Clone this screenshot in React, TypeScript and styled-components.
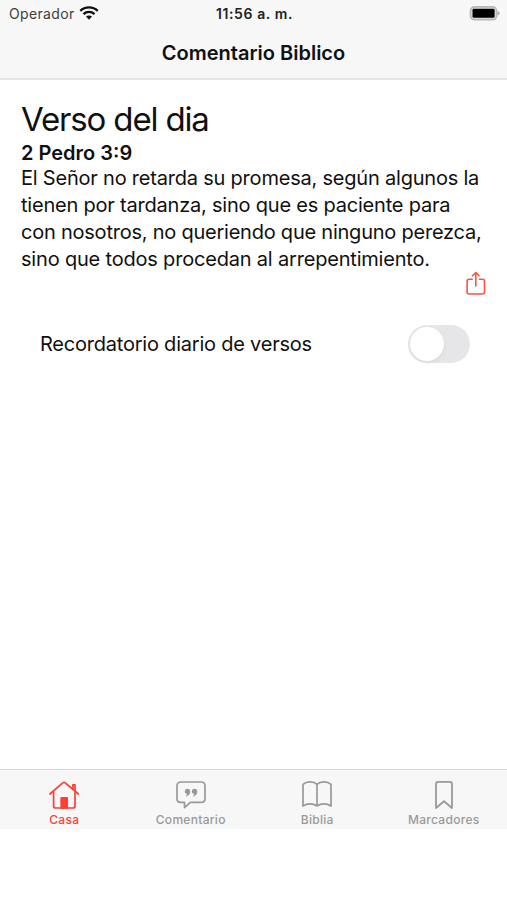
import React, { useState } from "react";
import styled, { createGlobalStyle } from "styled-components";

const GlobalStyle = createGlobalStyle`
  *, *::before, *::after { box-sizing: border-box; }
  body { margin: 0; background: #fff; color: #101010; font-family: Inter, "Liberation Sans", sans-serif; }
`;

const Screen = styled.div`
  display: flex;
  flex-direction: column;
  width: 507px;
  height: 900px;
  padding-bottom: 71px;
  overflow: hidden;
  background: #fff;
`;

const Header = styled.header`
  flex: none;
  height: 80px;
  background: #f7f7f7;
  border-bottom: 2px solid #e6e6e6;
`;

const StatusBar = styled.div`
  display: grid;
  grid-template-columns: 1fr auto 1fr;
  align-items: center;
  height: 27px;
  padding: 0 7px 0 9px;
`;

const Carrier = styled.div`
  display: flex;
  align-items: center;
  gap: 4px;
  color: #3c3c3c;
  font-size: 14px;
  letter-spacing: 0.35px;
`;

const Clock = styled.div`
  font-size: 14px;
  font-weight: 600;
  letter-spacing: 0.6px;
  color: #222;
`;

const BatterySlot = styled.div`
  display: flex;
  justify-content: flex-end;
`;

const NavTitle = styled.h1`
  margin: 0;
  height: 51px;
  line-height: 52px;
  text-align: center;
  font-size: 20px;
  font-weight: 600;
  letter-spacing: 0;
`;

const Content = styled.main`
  flex: 1;
  padding: 20px 21px 0 21px;
`;

const Heading = styled.h2`
  margin: 0;
  height: 40px;
  line-height: 39px;
  font-size: 33px;
  font-weight: 400;
  letter-spacing: -1.15px;
`;

const Reference = styled.h3`
  margin: 0;
  height: 25px;
  line-height: 26px;
  font-size: 20px;
  font-weight: 600;
`;

const Verse = styled.p`
  margin: 0;
  line-height: 27px;
  font-size: 20px;
`;

const Line = styled.span<{ $spacing: number }>`
  display: block;
  white-space: nowrap;
  letter-spacing: ${(p) => p.$spacing}px;
`;

const ShareRow = styled.div`
  display: flex;
  justify-content: flex-end;
  height: 26px;
  margin-top: -2px;
`;

const IconButton = styled.button`
  display: block;
  height: 25px;
  padding: 0;
  border: 0;
  background: none;
  color: #fb5148;
  svg { display: block; }
`;

const SettingRow = styled.div`
  display: flex;
  align-items: center;
  justify-content: space-between;
  height: 38px;
  margin: 28px 16px 0 19px;
  font-size: 20px;
  letter-spacing: -0.22px;
`;

const Toggle = styled.button<{ $on: boolean }>`
  display: flex;
  justify-content: ${(p) => (p.$on ? "flex-end" : "flex-start")};
  width: 62px;
  height: 38px;
  padding: 2px;
  border: 0;
  border-radius: 19px;
  background: ${(p) => (p.$on ? "#34c759" : "#e6e6e8")};
`;

const Knob = styled.span`
  width: 34px;
  height: 34px;
  border-radius: 50%;
  background: #fff;
  box-shadow: 0 2px 4px rgba(0, 0, 0, 0.06);
`;

const TabBar = styled.nav`
  flex: none;
  display: grid;
  grid-template-columns: repeat(4, 1fr);
  height: 60px;
  padding-left: 1px;
  border-top: 1px solid #d9d9d9;
  background: #f7f7f7;
`;

const Tab = styled.button<{ $active: boolean }>`
  display: flex;
  flex-direction: column;
  align-items: center;
  padding: 10px 0 0;
  border: 0;
  background: none;
  font-family: inherit;
  font-size: 12px;
  font-weight: 500;
  line-height: 16px;
  letter-spacing: 0.3px;
  color: ${(p) => (p.$active ? "#ff3e35" : "#999")};
  svg { display: block; flex: none; }
`;

const Wifi = () => (
  <svg width="20" height="15" viewBox="0 0 20 15" fill="none" stroke="#111" strokeWidth="2.3">
    <path d="M1.3 4.8C6.2.2 13.8.2 18.7 4.8" />
    <path d="M4.5 8.1C7.6 5.2 12.4 5.2 15.5 8.1" />
    <path d="M10 13.7 7 10.6C8.7 9 11.3 9 13 10.6Z" fill="#111" stroke="none" />
  </svg>
);

const Battery = () => (
  <svg width="31" height="15" viewBox="0 0 31 15">
    <rect x="1.5" y="0.9" width="26.1" height="12.8" rx="4" fill="#e2e2e2" stroke="#b8b8b8" strokeWidth="1.7" />
    <rect x="3.5" y="2.8" width="22.1" height="9" rx="1.4" fill="#000" />
    <path d="M28.6 4.9q2 .8 2 2.3t-2 2.3z" fill="#a8a8a8" />
  </svg>
);

const Share = () => (
  <svg width="20" height="25" viewBox="0 0 20 25" fill="none" stroke="currentColor" strokeWidth="1.6" strokeLinecap="round" strokeLinejoin="round">
    <path d="M6.2 8.2H3.2Q1.1 8.2 1.1 10.3V21Q1.1 23 3.2 23H16.4Q18.5 23 18.5 21V10.3Q18.5 8.2 16.4 8.2H13.4" />
    <path d="M9.8 15V1.6M6.5 4.8 9.8 1.5 13.1 4.8" />
  </svg>
);

const Home = () => (
  <svg width="32" height="32" viewBox="0 0 32 32" fill="none" stroke="currentColor" strokeWidth="1.7" strokeLinecap="round" strokeLinejoin="round">
    <path d="M1.9 14 14.8 2.9Q16 1.9 17.2 2.9L30.4 14" />
    <path d="M24.9 9V4.8H27V11" />
    <path d="M5.6 12V26Q5.6 28 7.6 28H25Q27 28 27 26V12" />
    <path d="M13.2 28V17.8H19.2V28Z" fill="currentColor" />
  </svg>
);

const Quote = () => (
  <svg width="32" height="32" viewBox="0 0 32 32" fill="none" stroke="currentColor" strokeWidth="1.7" strokeLinejoin="round">
    <path d="M6 2H26Q30 2 30 6V18.4Q30 22.4 26 22.4H15.3L9.5 27.6V22.4H6Q2 22.4 2 18.4V6Q2 2 6 2Z" />
    <g fill="currentColor" stroke="none">
      <path d="M12.4 8.8A2.5 2.5 0 0 0 12.2 13.8Q12 15 10.7 15.9L11.5 16.4Q15.2 14.7 15.2 11.7 15.2 8.8 12.4 8.8Z" />
      <path d="M19.5 8.8A2.5 2.5 0 0 0 19.3 13.8Q19.1 15 17.8 15.9L18.6 16.4Q22.3 14.7 22.3 11.7 22.3 8.8 19.5 8.8Z" />
    </g>
  </svg>
);

const Book = () => (
  <svg width="32" height="32" viewBox="0 0 32 32" fill="none" stroke="currentColor" strokeWidth="1.7" strokeLinejoin="round">
    <path d="M16 4.3C12.5.8 5.5 1.1 2 4.3V26C6 23.1 12 23.1 16 26 20 23.1 26 23.1 30 26V4.3C26.5 1.1 19.5.8 16 4.3ZM16 4.3V26" />
  </svg>
);

const Bookmark = () => (
  <svg width="32" height="32" viewBox="0 0 32 32" fill="none" stroke="currentColor" strokeWidth="1.8" strokeLinejoin="round">
    <path d="M10.4 1.8H21.6Q24 1.8 24 4.2V28L16 21.2 8 28V4.2Q8 1.8 10.4 1.8Z" />
  </svg>
);

const verseLines = [
  { text: "El Señor no retarda su promesa, según algunos la", spacing: -0.21 },
  { text: "tienen por tardanza, sino que es paciente para", spacing: -0.21 },
  { text: "con nosotros, no queriendo que ninguno perezca,", spacing: -0.23 },
  { text: "sino que todos procedan al arrepentimiento.", spacing: -0.19 },
];

const tabs = [
  { label: "Casa", icon: <Home /> },
  { label: "Comentario", icon: <Quote /> },
  { label: "Biblia", icon: <Book /> },
  { label: "Marcadores", icon: <Bookmark /> },
];

export default function App() {
  const [reminder, setReminder] = useState(false);
  const [active, setActive] = useState(0);
  return (
    <>
      <GlobalStyle />
      <Screen>
        <Header>
          <StatusBar>
            <Carrier>Operador <Wifi /></Carrier>
            <Clock>11:56 a. m.</Clock>
            <BatterySlot><Battery /></BatterySlot>
          </StatusBar>
          <NavTitle>Comentario Biblico</NavTitle>
        </Header>
        <Content>
          <Heading>Verso del dia</Heading>
          <Reference>2 Pedro 3:9</Reference>
          <Verse>
            {verseLines.map((l) => <Line key={l.text} $spacing={l.spacing}>{l.text}</Line>)}
          </Verse>
          <ShareRow><IconButton aria-label="Compartir"><Share /></IconButton></ShareRow>
          <SettingRow>
            <span>Recordatorio diario de versos</span>
            <Toggle $on={reminder} role="switch" aria-checked={reminder} onClick={() => setReminder(!reminder)}>
              <Knob />
            </Toggle>
          </SettingRow>
        </Content>
        <TabBar>
          {tabs.map((t, i) => (
            <Tab key={t.label} $active={i === active} onClick={() => setActive(i)}>
              {t.icon}
              {t.label}
            </Tab>
          ))}
        </TabBar>
      </Screen>
    </>
  );
}
